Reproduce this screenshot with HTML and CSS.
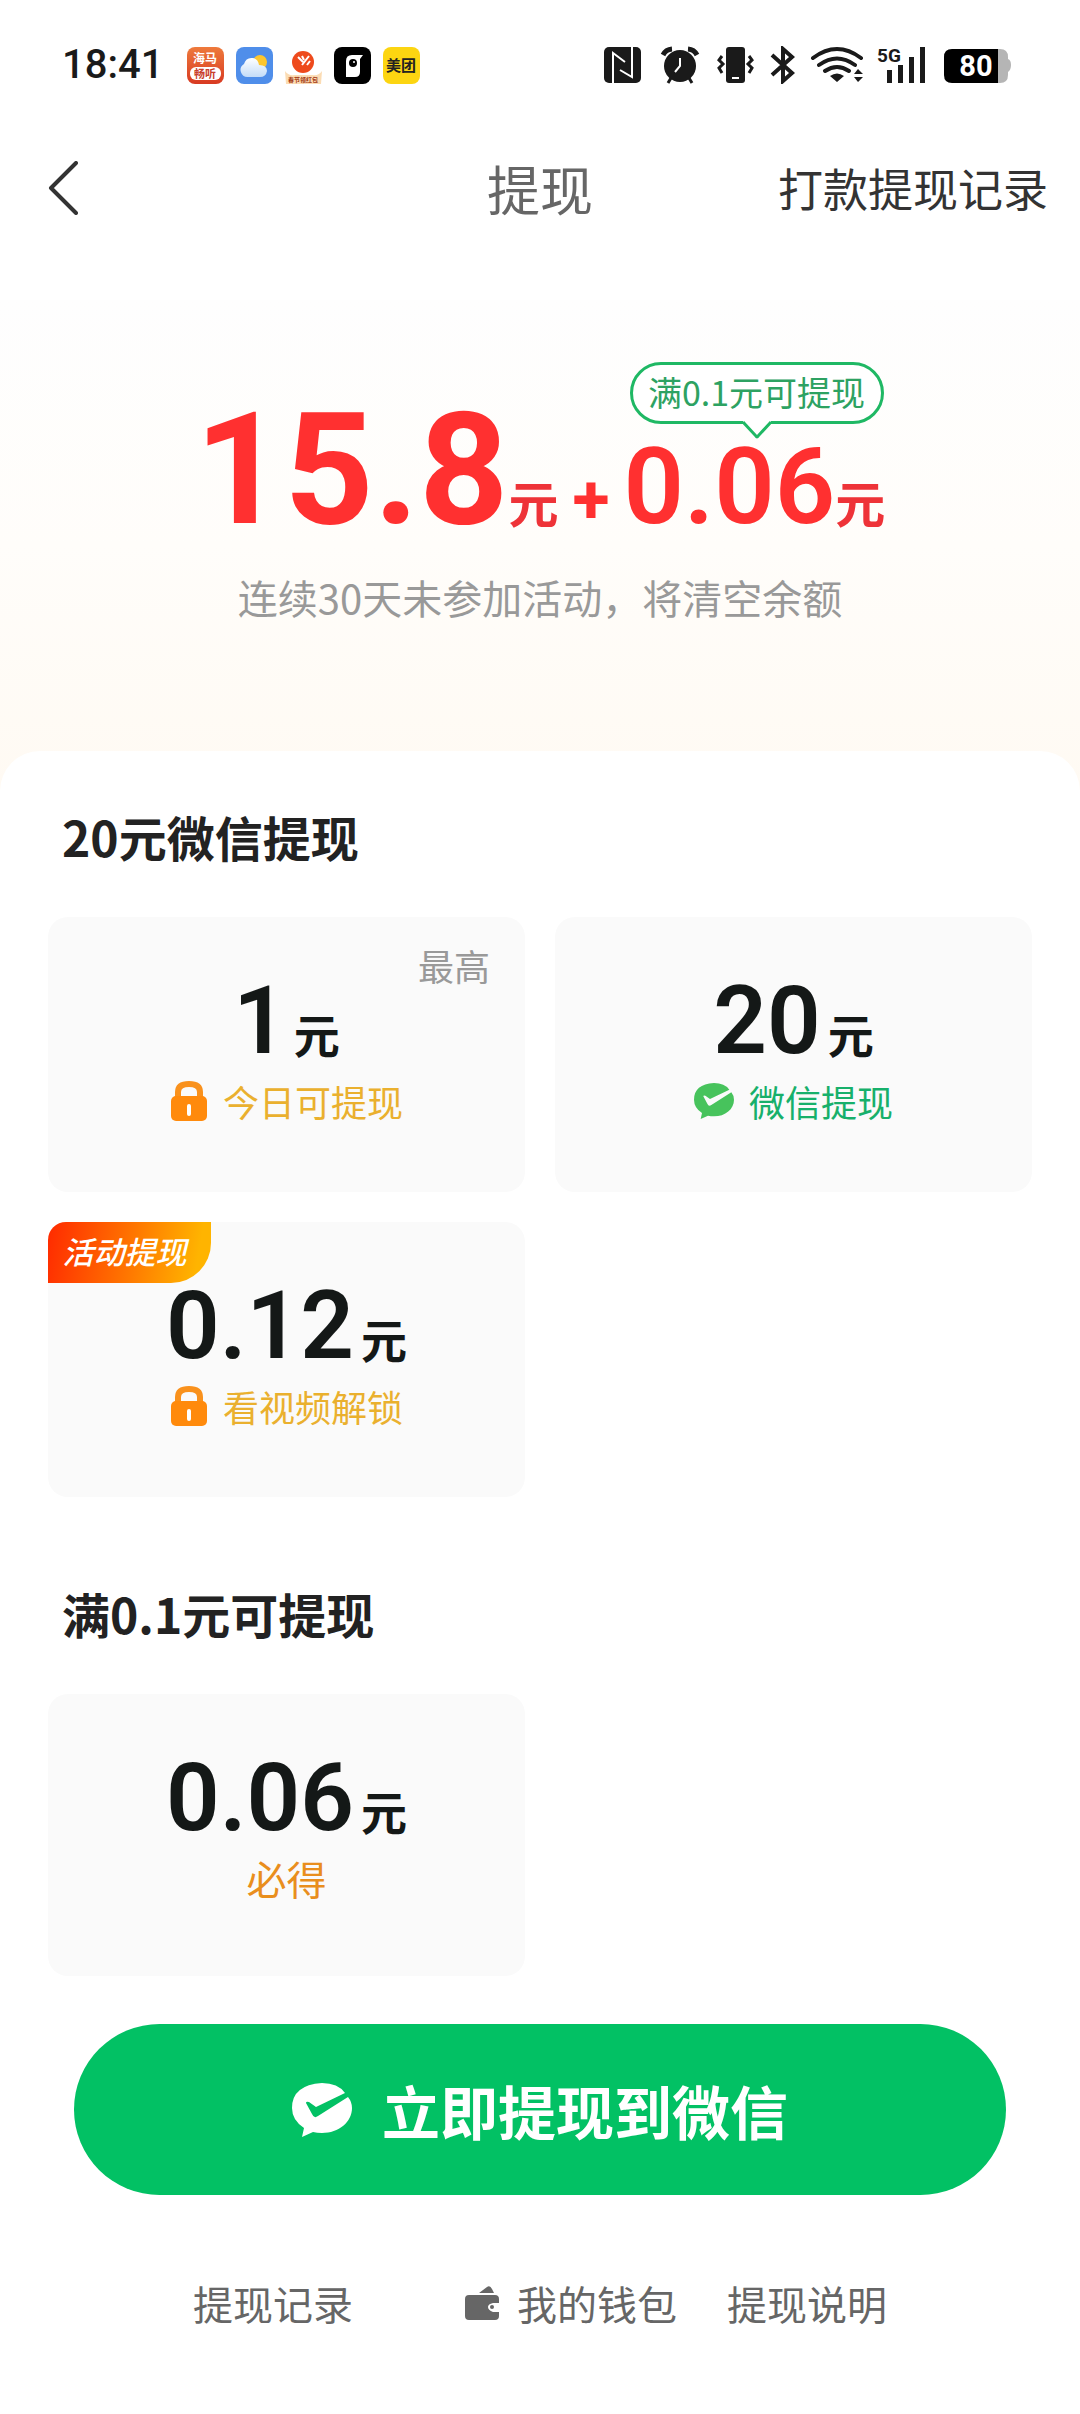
FILE: index.html
```html
<!DOCTYPE html>
<html lang="zh-CN">
<head>
<meta charset="utf-8">
<meta name="viewport" content="width=device-width, initial-scale=1">
<title>提现</title>
<link rel="stylesheet" href="styles.css">
</head>
<body>
<svg class="defs" aria-hidden="true">
  <symbol id="lock" viewBox="0 0 38 40">
    <path d="M8 17V11Q8 3 19 3T30 11V17" fill="none" stroke="#f9911c" stroke-width="6"/>
    <rect x="1" y="15" width="36" height="25" rx="5" fill="#ff8a0c"/>
    <rect x="17" y="23" width="4" height="12" rx="2" fill="#fff"/>
  </symbol>
  <symbol id="wechat-pay" viewBox="0 0 60 54">
    <path fill="currentColor" d="M56 14 26 33Q22 36 20 31L14 20Q14 18 17 19L24 24 53 10Q46 0 30 0 0 2 0 25 0 37 12 45L10 54 21 49Q25 50 30 50C47 50 60 39 60 25Q60 19 56 14Z"/>
  </symbol>
</svg>

<div class="status">
  <span class="time">18:41</span>
  <div class="apps">
    <svg class="app" viewBox="0 0 37 37">
      <defs><linearGradient id="haima" x2="0" y2="1"><stop stop-color="#ee7a3c"/><stop offset="1" stop-color="#d83a22"/></linearGradient></defs>
      <rect width="37" height="37" rx="8" fill="url(#haima)"/>
      <rect x="3" y="20" width="31" height="13" rx="6" fill="#fff"/>
      <text x="18" y="16" font-size="12" font-weight="700" text-anchor="middle" fill="#fff">海马</text>
      <text x="18" y="31" font-size="11" font-weight="700" text-anchor="middle" fill="#c9402c">畅听</text>
    </svg>
    <svg class="app" viewBox="0 0 37 37">
      <defs><linearGradient id="cloud" x2="0" y2="1"><stop stop-color="#fff"/><stop offset="1" stop-color="#c3dcf8"/></linearGradient></defs>
      <rect width="37" height="37" rx="8" fill="#4f8eea"/>
      <circle cx="24" cy="15" r="7" fill="#fdc62e"/>
      <path d="M12 30A7 7 0 0 1 8 17Q10 10 17 11 22 12 23 18 31 18 31 24 30 30 24 30Z" fill="url(#cloud)"/>
    </svg>
    <svg class="app" viewBox="0 0 37 37">
      <path d="M0 24Q3 29 10 28H27Q34 29 37 24L36 37H1Z" fill="#fbdcb4"/>
      <circle cx="18" cy="15" r="11" fill="#ee4a1c"/>
      <path d="M13 10 18 15M17 9 19 13M24 9 17 18M25 14 22 18" stroke="#fff" stroke-width="2"/>
      <text x="18" y="35" font-size="6" font-weight="700" text-anchor="middle" fill="#a33812">春节领红包</text>
    </svg>
    <svg class="app" viewBox="0 0 37 37">
      <rect width="37" height="37" rx="8" fill="#000"/>
      <path d="M12 30V14Q12 8 18 8H29L26 12V25Q26 30 21 30Z" fill="#fff"/>
      <circle cx="19" cy="16" r="4" fill="#000"/><circle cx="20" cy="15" r="1" fill="#fff"/>
    </svg>
    <svg class="app" viewBox="0 0 37 37">
      <rect width="37" height="37" rx="8" fill="#fcd511"/>
      <text x="18" y="24" font-size="15" font-weight="700" text-anchor="middle" fill="#222">美团</text>
    </svg>
  </div>
  <svg class="system" viewBox="0 0 408 38" aria-label="系统状态">
    <g fill="#1a1a1a">
      <rect y="1" width="37" height="36" rx="5"/>
      <path d="M9 37V7L21 16M28 1V31L16 24" fill="none" stroke="#fff" stroke-width="2"/>
      <circle cx="76" cy="20" r="16"/>
      <path d="M59 9A11 11 0 0 1 68 3M93 9A11 11 0 0 0 84 3" stroke="#1a1a1a" stroke-width="5" fill="none"/>
      <path d="M67 32 64 37M85 32 88 37" stroke="#1a1a1a" stroke-width="3"/>
      <path d="M76 12V20L71 26" fill="none" stroke="#fff" stroke-width="2"/>
      <rect x="122" y="1" width="19" height="36" rx="3"/>
      <path d="M128 32H135" stroke="#fff" stroke-width="2"/>
      <path d="M118 10 115 14 119 18 115 22 118 27M145 10 148 14 144 18 148 22 145 27" fill="none" stroke="#1a1a1a" stroke-width="3"/>
      <path d="M168 9 188 27 179 35V3L188 11 168 29" fill="none" stroke="#1a1a1a" stroke-width="4"/>
      <path d="M209 12Q233-6 257 12M215 19Q233 6 251 19M221 25Q233 17 245 25" fill="none" stroke="#1a1a1a" stroke-width="4" stroke-linecap="round"/>
      <path d="M226 30Q233 25 240 30L233 36ZM250 28 254 23 259 28ZM250 31 254 36 259 31Z"/>
      <text x="273" y="16" font-size="19" font-weight="700" font-family="Roboto, sans-serif">5G</text>
      <path d="M283 24h5v13h-5zM294 19h5v18h-5zM305 11h5v26h-5zM316 1h5v36h-5z"/>
      <path d="M390 3h6q8 0 8 8v2q3 1 3 6t-3 7v3q0 8-8 8h-6z" fill="#b5b5b5"/>
      <path d="M348 3H394V37H348Q340 37 340 29V11Q340 3 348 3Z" fill="#000"/>
      <text x="372" y="30" font-size="29" font-weight="700" font-family="Roboto, sans-serif" text-anchor="middle" fill="#fff">80</text>
    </g>
  </svg>
</div>

<header class="nav">
  <button class="back" aria-label="返回"><svg viewBox="0 0 30 54"><path d="M28 2 3 27 28 52" fill="none" stroke="#333" stroke-width="4" stroke-linecap="round" stroke-linejoin="round"/></svg></button>
  <h1 class="title">提现</h1>
  <a class="history" href="#history">打款提现记录</a>
</header>

<main>
  <section class="hero">
    <div class="balance">
      <span class="big">15.8</span><span class="unit">元</span>
      <span class="plus">+</span>
      <span class="extra"><span class="mid">0.06</span><span class="unit">元</span>
        <span class="bubble">满0.1元可提现<svg class="tail" viewBox="0 0 28 20"><path d="M0 0H28V2L15 17Q14 19 13 17L0 2Z" fill="#fff"/><path d="M0 2 13 16Q14 18 15 16L28 2" fill="none" stroke="#1fb864" stroke-width="3"/></svg></span>
      </span>
    </div>
    <p class="notice">连续30天未参加活动，将清空余额</p>
  </section>

  <div class="sheet">
    <section>
      <h2 class="heading">20元微信提现</h2>
      <div class="grid">
        <button class="card">
          <span class="corner">最高</span>
          <span class="amount"><span class="num">1</span><span class="yuan">元</span></span>
          <span class="sub gold"><svg class="lock"><use href="#lock"/></svg>今日可提现</span>
        </button>
        <button class="card">
          <span class="amount"><span class="num">20</span><span class="yuan">元</span></span>
          <span class="sub green"><svg class="pay"><use href="#wechat-pay"/></svg>微信提现</span>
        </button>
        <button class="card">
          <span class="ribbon">活动提现</span>
          <span class="amount"><span class="num">0.12</span><span class="yuan">元</span></span>
          <span class="sub gold"><svg class="lock"><use href="#lock"/></svg>看视频解锁</span>
        </button>
      </div>
    </section>
    <section class="second">
      <h2 class="heading">满0.1元可提现</h2>
      <div class="grid">
        <button class="card tall">
          <span class="amount"><span class="num">0.06</span><span class="yuan">元</span></span>
          <span class="sub sure">必得</span>
        </button>
      </div>
    </section>
    <button class="submit"><svg class="pay-large"><use href="#wechat-pay"/></svg>立即提现到微信</button>
    <footer class="links">
      <a class="first" href="#records">提现记录</a>
      <a class="wallet" href="#wallet"><svg viewBox="0 0 34 34"><path fill="#666" d="M14 7 22 1Q25-1 27 3L29 7ZM4 9H30Q34 9 34 13V17H28Q23 18 23 21T28 26H34V30Q34 34 30 34H4Q0 34 0 30V13Q0 9 4 9Z"/><circle cx="27" cy="21" r="2" fill="#666"/></svg>我的钱包</a>
      <a href="#help">提现说明</a>
    </footer>
  </div>
</main>
</body>
</html>
```
FILE: styles.css
```css
* { box-sizing: border-box; }
body {
  margin: 0;
  background: #fff;
  color: #222;
  font-family: "Noto Sans CJK SC", sans-serif;
}
button {
  border: 0;
  padding: 0;
  background: none;
  color: inherit;
  font: inherit;
}
a { color: inherit; text-decoration: none; }
h1, h2, p { margin: 0; }
.defs { position: absolute; width: 0; height: 0; }

.status {
  display: flex;
  align-items: center;
  height: 130px;
  padding: 0 68px 0 62px;
}
.time {
  font: 500 40px/48px Roboto, sans-serif;
  color: #1a1a1a;
}
.apps { display: flex; gap: 12px; margin-left: 24px; }
.app { display: block; width: 37px; height: 37px; }
.system { width: 408px; height: 38px; margin-left: auto; }

.nav {
  display: grid;
  grid-template-columns: 1fr auto 1fr;
  align-items: center;
  height: 116px;
  padding: 0 32px;
}
.back { justify-self: start; width: 30px; height: 54px; margin-left: 16px; }
.back svg { display: block; width: 30px; height: 54px; }
.title { font-size: 53px; font-weight: 400; line-height: 80px; color: #666; }
.history { justify-self: end; font-size: 45px; line-height: 80px; color: #333; }

.hero {
  margin-top: 54px;
  padding: 110px 0 164px;
  background: linear-gradient(#fefefe, #fffdfa 50%, #fffaf3);
  text-align: center;
}
.balance {
  display: flex;
  justify-content: center;
  align-items: baseline;
  height: 130px;
  color: #ff3030;
  line-height: 120px;
}
.big { font: 700 156px/120px Roboto, sans-serif; }
.mid { font: 600 106px/120px Roboto, sans-serif; }
.unit { font-size: 50px; font-weight: 700; line-height: 60px; color: #ee3338; }
.plus { margin: 0 14px; font: 700 68px/60px Roboto, sans-serif; }
.extra { position: relative; }
.bubble {
  position: absolute;
  left: 6px;
  top: -65px;
  width: 254px;
  height: 62px;
  border: 3px solid #1fb864;
  border-radius: 31px;
  background: #fff;
  color: #2da262;
  font-size: 34px;
  line-height: 54px;
  white-space: nowrap;
}
.tail { position: absolute; left: 110px; top: 55px; width: 28px; height: 20px; }
.notice { margin-top: 27px; font-size: 40px; line-height: 60px; color: #999; }

.sheet {
  margin-top: -40px;
  padding: 50px 48px 54px;
  border-radius: 40px 40px 0 0;
  background: #fff;
}
.heading { padding-left: 14px; font-size: 48px; font-weight: 700; line-height: 70px; }
.grid {
  display: grid;
  grid-template-columns: 1fr 1fr;
  gap: 30px;
  margin-top: 46px;
}
.card {
  position: relative;
  display: flex;
  flex-direction: column;
  align-items: center;
  min-height: 275px;
  padding-top: 54px;
  border-radius: 20px;
  background: #fafafa;
}
.tall { min-height: 282px; }
.amount { display: flex; align-items: baseline; gap: 7px; height: 100px; color: #141817; }
.num { font: 600 94px/100px Roboto, sans-serif; }
.yuan { font-size: 46px; font-weight: 700; line-height: 60px; }
.sub {
  display: flex;
  align-items: center;
  gap: 15px;
  height: 60px;
  font-size: 36px;
}
.gold { color: #eab02e; }
.green { color: #17b06b; }
.sure { font-size: 40px; color: #e98e1d; }
.lock { width: 38px; height: 40px; }
.pay { width: 40px; height: 36px; color: #47c35c; }
.corner { position: absolute; right: 35px; top: 22px; font-size: 36px; line-height: 52px; color: #999; }
.ribbon {
  position: absolute;
  left: 0;
  top: 0;
  width: 163px;
  height: 61px;
  padding-right: 10px;
  border-radius: 18px 0 40px 0;
  background: linear-gradient(100deg, #ff2a00, #ff7500 50%, #ffb400 90%);
  color: #fff;
  font-size: 31px;
  font-weight: 500;
  font-style: italic;
  line-height: 58px;
}
.second { margin-top: 81px; }

.submit {
  display: flex;
  justify-content: center;
  align-items: center;
  gap: 30px;
  width: calc(100% - 52px);
  height: 171px;
  margin: 48px 26px 0;
  border-radius: 86px;
  background: #02c164;
  color: #fff;
  font-size: 58px;
  font-weight: 700;
}
.pay-large { width: 60px; height: 54px; }
.links {
  display: flex;
  justify-content: center;
  gap: 50px;
  margin-top: 78px;
  font-size: 40px;
  line-height: 60px;
  color: #666;
}
.first { margin-right: 62px; }
.wallet { display: flex; align-items: center; gap: 18px; }
.wallet svg { width: 34px; height: 34px; }
```
